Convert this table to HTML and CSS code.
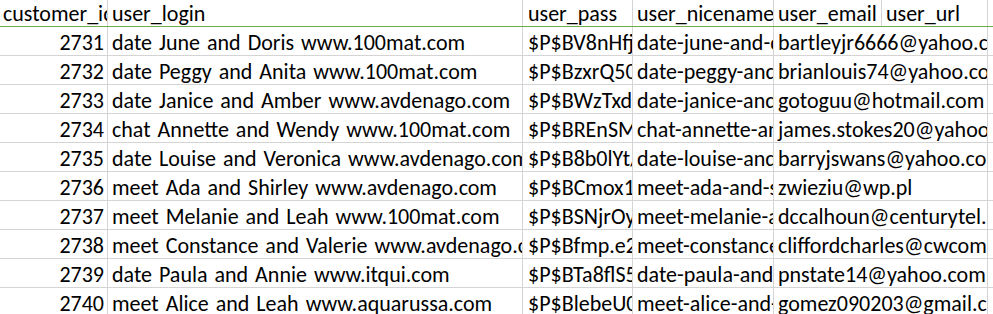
FILE: index.html
```html
<!DOCTYPE html>
<html lang="en">

<head>
    <meta charset="UTF-8">
    <meta name="viewport" content="width=device-width, initial-scale=1.0">
    <title>customers</title>

    <link rel="stylesheet" href="styles.css">
</head>

<body>
    <div class="sheet">
        <div class="row row-head">
            <div class="cell c-id">customer_id</div>
            <div class="cell c-login">user_login</div>
            <div class="cell c-pass">user_pass</div>
            <div class="cell c-nice">user_nicename</div>
            <div class="cell c-email">user_email</div>
            <div class="cell c-url">user_url</div>
            <div class="cell c-rest"></div>
        </div>

        <div class="row">
            <div class="cell c-id num">2731</div>
            <div class="cell c-login">date June and Doris www.100mat.com</div>
            <div class="cell c-pass">$P$BV8nHfjq2LdxK0wZ1</div>
            <div class="cell c-nice">date-june-and-doris-www-100mat-com</div>
            <div class="cell c-mail">bartleyjr6666@yahoo.com</div>
            <div class="cell c-rest"></div>
        </div>
        <div class="row">
            <div class="cell c-id num">2732</div>
            <div class="cell c-login">date Peggy and Anita www.100mat.com</div>
            <div class="cell c-pass">$P$BzxrQ50kPmT7vYh3</div>
            <div class="cell c-nice">date-peggy-and-anita-www-100mat-com</div>
            <div class="cell c-mail">brianlouis74@yahoo.com</div>
            <div class="cell c-rest"></div>
        </div>
        <div class="row">
            <div class="cell c-id num">2733</div>
            <div class="cell c-login">date Janice and Amber www.avdenago.com</div>
            <div class="cell c-pass">$P$BWzTxdR4nQe8LkF0</div>
            <div class="cell c-nice">date-janice-and-amber-www-avdenago-com</div>
            <div class="cell c-mail">gotoguu@hotmail.com</div>
            <div class="cell c-rest"></div>
        </div>
        <div class="row">
            <div class="cell c-id num">2734</div>
            <div class="cell c-login">chat Annette and Wendy www.100mat.com</div>
            <div class="cell c-pass">$P$BREnSMw0gT5cJb9a</div>
            <div class="cell c-nice">chat-annette-and-wendy-www-100mat-com</div>
            <div class="cell c-mail">james.stokes20@yahoo.com</div>
            <div class="cell c-rest"></div>
        </div>
        <div class="row">
            <div class="cell c-id num">2735</div>
            <div class="cell c-login">date Louise and Veronica www.avdenago.com</div>
            <div class="cell c-pass">$P$B8b0lYt/Hs2rVx6p</div>
            <div class="cell c-nice">date-louise-and-veronica-www-avdenago-com</div>
            <div class="cell c-mail">barryjswans@yahoo.com</div>
            <div class="cell c-rest"></div>
        </div>
        <div class="row">
            <div class="cell c-id num">2736</div>
            <div class="cell c-login">meet Ada and Shirley www.avdenago.com</div>
            <div class="cell c-pass">$P$BCmox1Zq7Wn3Ku4e</div>
            <div class="cell c-nice">meet-ada-and-shirley-www-avdenago-com</div>
            <div class="cell c-mail">zwieziu@wp.pl</div>
            <div class="cell c-rest"></div>
        </div>
        <div class="row">
            <div class="cell c-id num">2737</div>
            <div class="cell c-login">meet Melanie and Leah www.100mat.com</div>
            <div class="cell c-pass">$P$BSNjrOyb6Tf1Gd8m</div>
            <div class="cell c-nice">meet-melanie-and-leah-www-100mat-com</div>
            <div class="cell c-mail">dccalhoun@centurytel.net</div>
            <div class="cell c-rest"></div>
        </div>
        <div class="row">
            <div class="cell c-id num">2738</div>
            <div class="cell c-login">meet Constance and Valerie www.avdenago.com</div>
            <div class="cell c-pass">$P$Bfmp.e2Lw9Rk0Xs5</div>
            <div class="cell c-nice">meet-constance-and-valerie-www-avdenago-com</div>
            <div class="cell c-mail">cliffordcharles@cwcom.net</div>
            <div class="cell c-rest"></div>
        </div>
        <div class="row">
            <div class="cell c-id num">2739</div>
            <div class="cell c-login">date Paula and Annie www.itqui.com</div>
            <div class="cell c-pass">$P$BTa8flS5uYc3Np7h</div>
            <div class="cell c-nice">date-paula-and-annie-www-itqui-com</div>
            <div class="cell c-mail">pnstate14@yahoo.com</div>
            <div class="cell c-rest"></div>
        </div>
        <div class="row">
            <div class="cell c-id num">2740</div>
            <div class="cell c-login">meet Alice and Leah www.aquarussa.com</div>
            <div class="cell c-pass">$P$BlebeU0Jm4Hq8Dv2</div>
            <div class="cell c-nice">meet-alice-and-leah-www-aquarussa-com</div>
            <div class="cell c-mail">gomez090203@gmail.com</div>
            <div class="cell c-rest"></div>
        </div>
    </div>
</body>

</html>
```

FILE: styles.css
```css
body {
    margin: 0;
    background: #ffffff;
    overflow: hidden;
}

.sheet {
    display: flex;
    flex-direction: column;
    width: 993px;
    font-family: Calibri, Carlito, 'Open Sans', 'Noto Sans', sans-serif;
    font-size: 22px;
    word-spacing: 2px;
    color: #000000;
}

.row {
    display: flex;
    height: 29px;
    box-sizing: border-box;
    border-bottom: 1px solid #d4d4d4;
    flex: none;
}

.row-head {
    height: 27px;
    border-bottom: 1px solid #70ad47;
}

.cell {
    box-sizing: border-box;
    flex: none;
    height: 100%;
    padding: 4px 3px 0 4px;
    line-height: 23px;
    white-space: nowrap;
    overflow: hidden;
    border-right: 1px solid #d4d4d4;
}

.row-head .cell {
    padding-top: 2px;
}

.num {
    text-align: right;
    padding-right: 3px;
}

.c-id {
    width: 108px;
    padding-left: 3px;
}

.c-login {
    width: 415px;
}

.c-pass {
    width: 110px;
    padding-left: 5px;
}

.c-nice {
    width: 141px;
}

.c-email {
    width: 108px;
}

.c-url {
    width: 106px;
}

.c-mail {
    width: 214px;
}

.c-rest {
    flex: 1;
    border-right: none;
}
```
